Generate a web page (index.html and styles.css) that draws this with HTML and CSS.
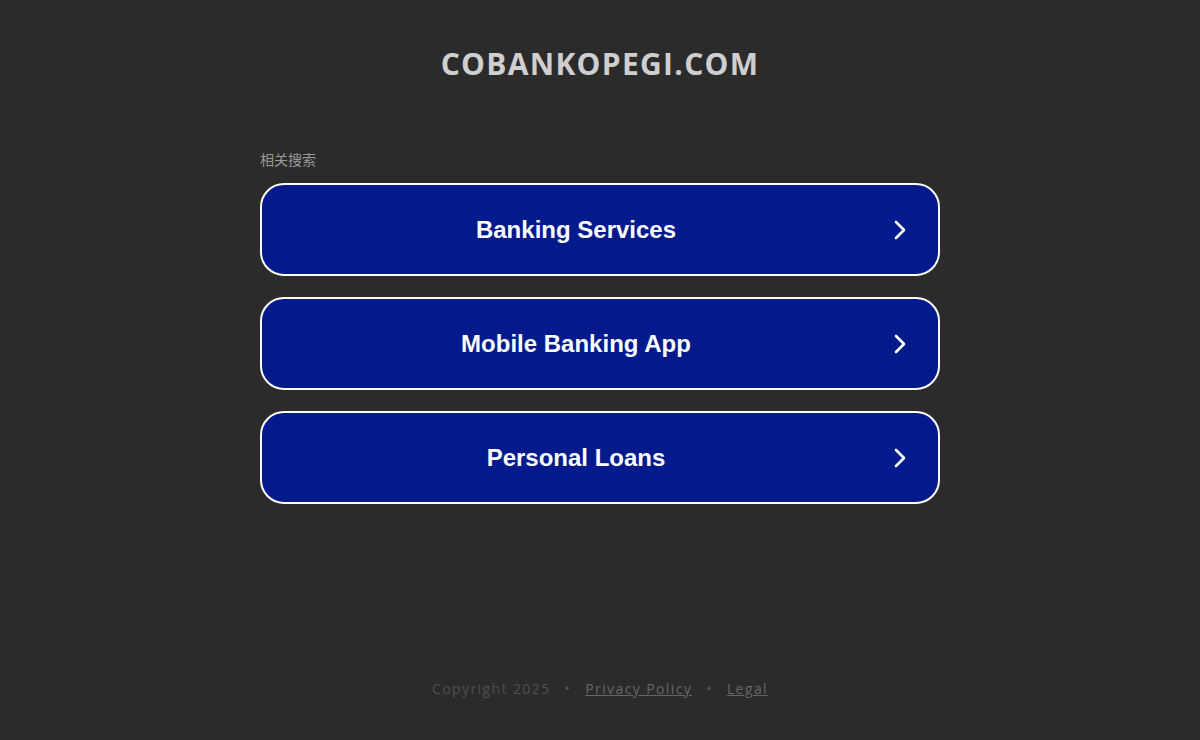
FILE: index.html
```html
<!DOCTYPE html>
<html lang="zh">
<head>
<meta charset="utf-8">
<title>cobankopegi.com</title>
<link rel="stylesheet" href="styles.css">
</head>
<body>
<div class="page">
  <header class="header">
    <h1 class="domain">COBANKOPEGI.COM</h1>
  </header>
  <main class="main">
    <div class="related">相关搜索</div>
    <ul class="links">
      <li><a class="link" href="#"><span class="link-text">Banking Services</span><span class="chev"><svg viewBox="0 0 16 24" width="16" height="24"><path d="M4 4 L12 12 L4 20" fill="none" stroke="#fff" stroke-width="2.6" stroke-linecap="round" stroke-linejoin="round"/></svg></span></a></li>
      <li><a class="link" href="#"><span class="link-text">Mobile Banking App</span><span class="chev"><svg viewBox="0 0 16 24" width="16" height="24"><path d="M4 4 L12 12 L4 20" fill="none" stroke="#fff" stroke-width="2.6" stroke-linecap="round" stroke-linejoin="round"/></svg></span></a></li>
      <li><a class="link" href="#"><span class="link-text">Personal Loans</span><span class="chev"><svg viewBox="0 0 16 24" width="16" height="24"><path d="M4 4 L12 12 L4 20" fill="none" stroke="#fff" stroke-width="2.6" stroke-linecap="round" stroke-linejoin="round"/></svg></span></a></li>
    </ul>
  </main>
  <footer class="footer">
    <span>Copyright 2025</span>
    <span class="dot">•</span>
    <a href="#">Privacy Policy</a>
    <span class="dot">•</span>
    <a href="#">Legal</a>
  </footer>
</div>
</body>
</html>
```
FILE: styles.css
```css
html, body {
  margin: 0;
  padding: 0;
  background: #2b2b2b;
}
.page {
  width: 1200px;
  height: 740px;
  display: flex;
  flex-direction: column;
  align-items: center;
}
.header {
  padding-top: 44px;
}
.domain {
  margin: 0;
  font-family: "Open Sans", sans-serif;
  font-weight: 700;
  font-size: 30px;
  line-height: 40px;
  color: #cfcfcf;
  letter-spacing: 1.3px;
}
.main {
  width: 680px;
  margin-top: 66px;
}
.related {
  font-family: "Noto Sans CJK SC", sans-serif;
  font-size: 14px;
  line-height: 18px;
  color: #9a9a9a;
  margin-bottom: 15px;
}
.links {
  list-style: none;
  margin: 0;
  padding: 0;
  display: flex;
  flex-direction: column;
  gap: 21px;
}
.link {
  display: flex;
  align-items: center;
  height: 88px;
  border: 2px solid #ffffff;
  border-radius: 24px;
  background: #021a8c;
  text-decoration: none;
  padding: 1px 30px 0 46px;
}
.link-text {
  flex: 1;
  text-align: center;
  font-family: "Liberation Sans", Arial, sans-serif;
  font-weight: 700;
  font-size: 24px;
  color: #ffffff;
}
.chev {
  width: 16px;
  height: 24px;
  display: flex;
  margin-left: 48px;
}
.footer {
  margin-top: auto;
  padding-bottom: 42px;
  font-family: "Open Sans", sans-serif;
  font-size: 14px;
  letter-spacing: 1.4px;
  color: #505050;
  display: flex;
  gap: 14px;
}
.footer a {
  color: #666666;
  text-decoration: underline;
}
.dot {
  color: #555555;
}
```
